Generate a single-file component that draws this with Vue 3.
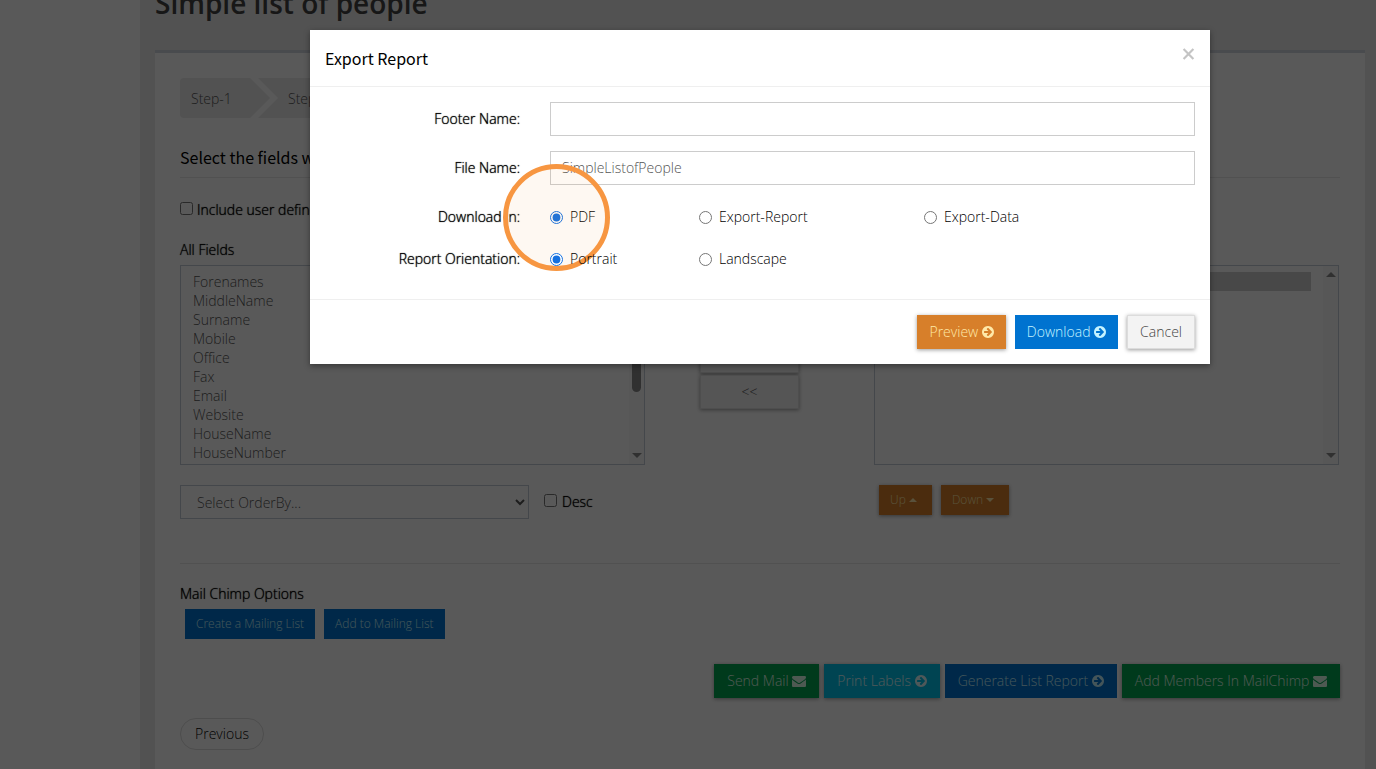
<script setup>
import { ref } from 'vue'

const fields = ['Forenames', 'MiddleName', 'Surname', 'Mobile', 'Office', 'Fax', 'Email', 'Website', 'HouseName', 'HouseNumber']
const chosen = ref(['Title'])
const footerName = ref('')
const fileName = ref('SimpleListofPeople')
const format = ref('PDF')
const orientation = ref('Portrait')

const arrowPath = 'M1413 896q0-27-18-45l-91-91-362-362q-18-18-45-18t-45 18l-91 91q-18 18-18 45t18 45l189 189h-502q-26 0-45 19t-19 45v128q0 26 19 45t45 19h502l-189 189q-19 19-19 45t19 45l91 91q18 18 45 18t45-18l362-362 91-91q18-18 18-45zm251 0q0 209-103 385.5t-279.5 279.5-385.5 103-385.5-103-279.5-279.5-103-385.5 103-385.5 279.5-279.5 385.5-103 385.5 103 279.5 279.5 103 385.5z'
const mailPath = 'M1792 710v794q0 66-47 113t-113 47h-1472q-66 0-113-47t-47-113v-794q44 49 101 87 362 246 497 345 57 42 92.5 65.5t94.5 48 110 24.5h2q51 0 110-24.5t94.5-48 92.5-65.5q170-123 498-345 57-39 100-87zm0-294q0 79-49 151t-122 123q-376 261-468 325-10 7-42.5 31t-54 38.5-52 32.5-57.5 27-50 9h-2q-23 0-50-9t-57.5-27-52-32.5-54-38.5-42.5-31q-91-64-262-182.5t-205-142.5q-62-42-117-115.5t-55-136.5q0-78 41.5-130t118.5-52h1472q65 0 112.5 47t47.5 113z'
const icons = {
  arrow: { path: arrowPath, box: '128 128 1536 1536' },
  mail: { path: mailPath, box: '0 128 1792 1536' }
}

const actions = [
  { text: 'Send Mail', tone: 'green', icon: 'mail' },
  { text: 'Print Labels', tone: 'cyan', icon: 'arrow' },
  { text: 'Generate List Report', tone: 'blue', icon: 'arrow' },
  { text: 'Add Members In MailChimp', tone: 'green', icon: 'mail' }
]
</script>

<template>
  <div class="page">
    <aside class="sidebar"></aside>
    <main class="content">
      <h1>Simple list of people</h1>
      <section class="panel">
        <ol class="steps">
          <li><a href="#step-1">Step-1</a></li>
          <li><a href="#step-2">Step-2</a></li>
        </ol>
        <h2>Select the fields want to display</h2>
        <label class="check include"><input type="checkbox" />Include user defined fields</label>

        <div class="lists">
          <div class="list-col">
            <label class="strong" for="all">All Fields</label>
            <div class="listbox">
              <select id="all" multiple>
                <option v-for="f in fields" :key="f">{{ f }}</option>
              </select>
              <span class="track"><i class="up"></i><i class="thumb"></i><i class="down"></i></span>
            </div>
          </div>
          <div class="movers">
            <button type="button">&lt;</button>
            <button type="button">&lt;&lt;</button>
          </div>
          <div class="list-col">
            <label class="strong" for="sel">Selected Fields</label>
            <div class="listbox">
              <select id="sel" v-model="chosen" multiple>
                <option>Title</option>
              </select>
              <span class="track"><i class="up"></i><i class="down"></i></span>
            </div>
          </div>
        </div>

        <div class="order">
          <div class="order-left">
            <select aria-label="Order by"><option>Select OrderBy...</option></select>
            <label class="check"><input type="checkbox" /><span>Desc</span></label>
          </div>
          <div class="order-right">
            <button type="button" class="btn small orange">Up <svg class="caret" viewBox="0 0 8 4"><path d="M0 4L4 0L8 4Z" /></svg></button>
            <button type="button" class="btn small orange">Down <svg class="caret" viewBox="0 0 8 4"><path d="M0 0L4 4L8 0Z" /></svg></button>
          </div>
        </div>

        <div class="chimp">
          <h3 class="strong">Mail Chimp Options</h3>
          <div class="chimp-buttons">
            <button type="button" class="btn small blue">Create a Mailing List</button>
            <button type="button" class="btn small blue">Add to Mailing List</button>
          </div>
        </div>

        <div class="actions">
          <button v-for="a in actions" :key="a.text" type="button" class="btn" :class="a.tone">
            {{ a.text }}
            <svg :class="a.icon" :viewBox="icons[a.icon].box"><path :d="icons[a.icon].path" /></svg>
          </button>
        </div>
        <button type="button" class="previous">Previous</button>
      </section>
    </main>

    <div class="overlay">
      <div class="modal" role="dialog" aria-labelledby="modal-title">
        <header>
          <h4 id="modal-title">Export Report</h4>
          <button type="button" class="close" aria-label="Close">
            <svg viewBox="0 0 11 11"><path d="M1 1L10 10M10 1L1 10" /></svg>
          </button>
        </header>
        <form class="body">
          <label class="strong" for="footer">Footer Name:</label>
          <input id="footer" v-model="footerName" type="text" />
          <label class="strong" for="file">File Name:</label>
          <input id="file" v-model="fileName" type="text" />
          <span id="fmt" class="strong">Download in:</span>
          <div class="radios" role="radiogroup" aria-labelledby="fmt">
            <label><input v-model="format" type="radio" name="format" value="PDF" />PDF</label>
            <label><input v-model="format" type="radio" name="format" value="Report" />Export-Report</label>
            <label><input v-model="format" type="radio" name="format" value="Data" />Export-Data</label>
            <span class="ring"></span>
          </div>
          <span id="ori" class="strong">Report Orientation:</span>
          <div class="radios" role="radiogroup" aria-labelledby="ori">
            <label><input v-model="orientation" type="radio" name="ori" value="Portrait" />Portrait</label>
            <label><input v-model="orientation" type="radio" name="ori" value="Landscape" />Landscape</label>
          </div>
        </form>
        <footer>
          <button type="button" class="btn orange">Preview <svg class="arrow" :viewBox="icons.arrow.box"><path :d="icons.arrow.path" /></svg></button>
          <button type="button" class="btn blue">Download <svg class="arrow" :viewBox="icons.arrow.box"><path :d="icons.arrow.path" /></svg></button>
          <button type="button" class="btn plain">Cancel</button>
        </footer>
      </div>
    </div>
  </div>
</template>

<style>
body {
  margin: 0;
  overflow: hidden;
}
</style>

<style scoped>
.page,
.page * {
  box-sizing: border-box;
}
.page {
  display: flex;
  position: relative;
  height: 100vh;
  overflow: hidden;
  background: #eaeaea;
  font: 300 14px/20px "Open Sans", sans-serif;
  color: #000;
}
button,
input,
select,
option {
  font: inherit;
  margin: 0;
}
.sidebar {
  width: 140px;
  flex: none;
  background: #fff;
}
.content {
  flex: 1;
  min-width: 0;
  padding: 0 11px 0 15px;
}
h1 {
  margin: -17px 0 27px;
  font-size: 28px;
  line-height: 40px;
  font-weight: 600;
  color: #444;
}
.panel {
  min-height: 100vh;
  padding: 25px;
  background: #fff;
  border-top: 3px solid #d2d6de;
}
.steps {
  display: flex;
  margin: 0;
  padding: 0;
  list-style: none;
}
.steps a {
  display: block;
  width: 90px;
  height: 40px;
  padding: 0 11px;
  line-height: 42px;
  color: #555;
  text-decoration: none;
  background: #eaeaea;
  clip-path: polygon(0 0, 70px 0, 90px 20px, 70px 40px, 0 40px);
}
.steps li:first-child a {
  border-radius: 4px 0 0 4px;
}
.steps li + li {
  margin-left: -12px;
}
.steps li + li a {
  width: 110px;
  padding-left: 30px;
  clip-path: polygon(0 0, 90px 0, 110px 20px, 90px 40px, 0 40px, 20px 20px);
}
h2 {
  margin: 25px 0 22px;
  padding-bottom: 6px;
  border-bottom: 1px solid #e8e8e8;
  font: 400 16px/28px "Noto Sans CJK SC", sans-serif;
}
.strong,
.check {
  font-weight: 300;
  text-shadow: 0 0 1px #000;
}
.check {
  display: flex;
  align-items: center;
}
.check input {
  width: 13px;
  height: 13px;
  margin-bottom: 4px;
}
.include {
  gap: 4px;
  margin-bottom: 20px;
}
.lists {
  display: grid;
  grid-template-columns: 1fr 229px 1fr;
  margin-right: 1px;
}
.list-col > label {
  display: block;
  margin-bottom: 5px;
}
.listbox {
  position: relative;
  height: 200px;
}
.listbox select {
  display: block;
  width: 100%;
  height: 100%;
  padding: 6px 27px 6px 12px;
  overflow: hidden;
  border: 1px solid #c2cad8;
  border-radius: 0;
  background: #fff;
  color: #555;
  outline: none;
}
.listbox option {
  height: 19px;
  min-height: 19px;
  padding: 0;
  line-height: 19px;
}
.listbox option:checked {
  background: #cecece;
}
.track {
  position: absolute;
  top: 1px;
  right: 1px;
  bottom: 1px;
  width: 15px;
  background: #fafafa;
}
.track i {
  position: absolute;
  left: 3px;
}
.track .up,
.track .down {
  border: 5px solid transparent;
}
.track .up {
  top: 1px;
  border-bottom-color: #8b8b8b;
}
.track .down {
  bottom: 1px;
  border-top-color: #8b8b8b;
}
.track .thumb {
  top: 15px;
  width: 9px;
  height: 111px;
  border-radius: 5px;
  background: #8b8b8b;
}
.movers {
  display: flex;
  flex-direction: column;
  justify-content: flex-end;
  gap: 2px;
  padding: 0 75px 56px 55px;
}
.movers button {
  height: 34px;
  border: 1px solid #e0e0e0;
  background: #f3f3f3;
  color: #555;
  box-shadow: 0 1px 4px rgba(0, 0, 0, 0.4);
}
.order {
  display: grid;
  grid-template-columns: 1fr 461px;
  margin: 20px 0 44px;
}
.order-left {
  display: flex;
  gap: 15px;
}
.order-left select {
  width: 349px;
  height: 34px;
  padding: 0 0 0 12px;
  border: 1px solid #c2cad8;
  border-radius: 0;
  background: #fff;
  color: #555;
}
.order-left .check {
  gap: 5px;
}
.order-right {
  display: flex;
  gap: 9px;
}
.btn {
  height: 34px;
  padding: 0 13px;
  border: 0;
  white-space: nowrap;
  box-shadow: 0 1px 4px rgba(0, 0, 0, 0.4);
}
.btn.small {
  height: 30px;
  padding: 0 11px;
  font-size: 12px;
}
.orange {
  background: #d77f2a;
  color: #ffe9a8;
}
.btn.blue {
  background: #0073d0;
  color: #c4f3ff;
  box-shadow: none;
}
.green {
  background: #00a651;
  color: #e0ffec;
}
.cyan {
  background: #00c4ea;
  color: #e0fbff;
}
.plain {
  border: 1px solid #dcdcdc;
  background: #f3f3f3;
  color: #444;
}
.btn svg {
  height: 12px;
  fill: currentColor;
  vertical-align: -1px;
}
.btn .arrow {
  width: 12px;
}
.btn .mail {
  width: 14px;
}
.btn .caret {
  width: 8px;
  height: 4px;
  margin-right: 4px;
  vertical-align: 2px;
}
.chimp {
  border-top: 1px solid #e8e8e8;
  padding-top: 20px;
}
.chimp h3 {
  margin: 0 0 5px;
  font-size: 14px;
}
.chimp-buttons {
  display: flex;
  gap: 9px;
  padding-left: 5px;
}
.actions {
  display: flex;
  justify-content: flex-end;
  gap: 5px;
  margin: 25px 0 20px;
}
.previous {
  height: 32px;
  padding: 0 14px;
  border: 1px solid #ddd;
  border-radius: 16px;
  background: #fff;
}
.overlay {
  position: absolute;
  inset: 0;
  padding: 30px 0 30px 144px;
  background: rgba(0, 0, 0, 0.65);
}
.modal {
  max-width: 900px;
  margin: 0 auto;
  background: #fff;
  box-shadow: 0 2px 6px rgba(0, 0, 0, 0.4);
}
.modal header {
  display: flex;
  justify-content: space-between;
  align-items: flex-start;
  padding: 14px 15px;
  border-bottom: 1px solid #efefef;
}
.modal h4 {
  margin: 0;
  font: 400 16px/28px "Noto Sans CJK SC", sans-serif;
}
.close {
  display: flex;
  margin-top: 4px;
  padding: 0;
  border: 0;
  background: none;
}
.close svg {
  width: 13px;
  height: 12px;
  stroke: #c4c4c4;
  stroke-width: 2;
}
.body {
  display: grid;
  grid-template-columns: 1fr 3fr;
  row-gap: 15px;
  padding: 15px 0 30px;
  align-items: center;
}
.body > .strong {
  padding-right: 15px;
  text-align: right;
}
.body > input {
  height: 34px;
  margin: 0 15px;
  padding: 0 11px 2px;
  border: 1px solid #ccc;
  border-radius: 0;
  color: #555;
}
.radios {
  display: grid;
  grid-template-columns: 149px 225px 1fr;
  position: relative;
  padding: 7px 15px 0;
  height: 27px;
}
.body > span.strong {
  padding-top: 7px;
}
.radios label {
  display: flex;
  align-items: center;
  gap: 7px;
}
.radios input {
  width: 13px;
  height: 13px;
  accent-color: #1470e0;
}
.ring {
  position: absolute;
  left: -32px;
  top: -36px;
  width: 107px;
  height: 107px;
  border: 5px solid #f79641;
  border-radius: 50%;
  background: rgba(247, 150, 65, 0.07);
  pointer-events: none;
}
.modal footer {
  display: flex;
  justify-content: flex-end;
  gap: 9px;
  padding: 15px;
  border-top: 1px solid #efefef;
}
.modal footer .btn {
  padding: 0 12px;
}
</style>
